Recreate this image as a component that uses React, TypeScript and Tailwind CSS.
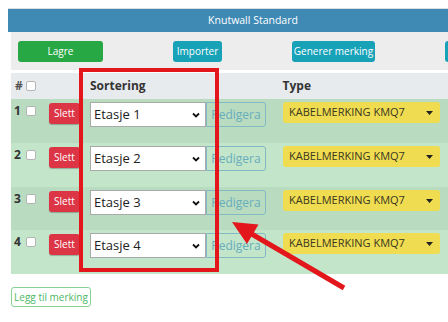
import React from "react";

const rows = [
  { n: 1, h: "h-[44px]", bg: "bg-[#b9dbc0]" },
  { n: 2, h: "h-[44px]", bg: "bg-[#c3e6cb]" },
  { n: 3, h: "h-[43px]", bg: "bg-[#b9dbc0]" },
  { n: 4, h: "h-[44px]", bg: "bg-[#c3e6cb]" },
];

function Check() {
  return <div className="w-[10px] h-[10px] bg-white border border-[#b5b5b5] rounded-[2px] shrink-0" />;
}

export default function App() {
  return (
    <div
      className="relative w-[448px] h-[322px] bg-white overflow-hidden"
      style={{ fontFamily: '"Open Sans", "Liberation Sans", sans-serif' }}
    >
      <div className="pt-[8px] pl-[8px]">
        <div className="w-[490px] h-[24px] bg-[#3f8ab5] border-t border-[#d8dde2] flex items-center justify-center text-white text-[10.5px]">
          Knutwall Standard
        </div>
      </div>
      <div className="pl-[11px]">
        <div className="bg-[#ededed] h-[38px] pt-[9px] pl-[7px] flex gap-[70px] whitespace-nowrap text-[10px] text-white">
          <div className="w-[85px] h-[21px] shrink-0 bg-[#28a745] rounded-[3px] flex items-center justify-center">Lagre</div>
          <div className="w-[49px] h-[21px] shrink-0 bg-[#17a2b8] rounded-[3px] flex items-center justify-center">Importer</div>
          <div className="w-[83px] h-[21px] shrink-0 bg-[#17a2b8] rounded-[3px] flex items-center justify-center">Generer merking</div>
          <div className="w-[60px] h-[21px] shrink-0 bg-[#17a2b8] rounded-[3px]" />
        </div>
        <div className="h-[3px]" />
        <div className="bg-[#e8ebee] h-[26px] flex items-center text-[12px] font-bold text-[#333]">
          <div className="w-[15px] pl-[4px] text-[#555]">#</div>
          <Check />
          <div className="ml-[54px]">Sortering</div>
          <div className="ml-[137px]">Type</div>
        </div>
        {rows.map((r) => (
          <div key={r.n} className={`${r.h} ${r.bg} flex items-start`}>
            <div className="mt-[6px] flex items-center">
              <div className="w-[15px] pl-[3px] text-[12px] font-bold text-[#333] leading-[12px]">{r.n}</div>
              <Check />
            </div>
            <div className="ml-[13px] mt-[4px] w-[31px] h-[21px] bg-[#dc3545] rounded-[3px] text-white text-[10px] flex items-center justify-center shadow-[0_1px_1px_rgba(0,0,0,0.25)]">
              Slett
            </div>
            <div className="ml-[10px] mt-[3px] flex">
              <div className="w-[116px] h-[25px] bg-white border border-[#a9a9a9] flex items-center justify-between pl-[3px] pr-[5px] text-[13px] text-[#222]">
                <span>Etasje {r.n}</span>
                <svg width="8" height="6" viewBox="0 0 8 6">
                  <path d="M1 1.5 L4 4.5 L7 1.5" fill="none" stroke="#111" strokeWidth="1.8" />
                </svg>
              </div>
              <div className="w-[60px] h-[25px] border border-[#82b9c4] rounded-r-[3px] flex items-center justify-center text-[12px] text-[#67adbb]">
                Redigera
              </div>
            </div>
            <div className="ml-[17px] mt-[3px] w-[157px] h-[21px] bg-[#efdc50] rounded-[3px] flex items-center justify-between pl-[6px] pr-[7px] text-[11px] text-[#3a3722]">
              <span>KABELMERKING KMQ7</span>
              <svg width="7" height="4" viewBox="0 0 7 4">
                <path d="M0 0 L7 0 L3.5 4 Z" fill="#222" />
              </svg>
            </div>
          </div>
        ))}
        <div className="mt-[13px] w-[80px] h-[20px] border border-[#86d295] rounded-[3px] flex items-center justify-center text-[10px] text-[#4cb862] whitespace-nowrap">
          Legg til merking
        </div>
      </div>

      <div className="absolute left-[79px] top-[68px] w-[140px] h-[204px] border-[4px] border-[#e3161c]" />
      <svg className="absolute left-0 top-0" width="448" height="322" viewBox="0 0 448 322">
        <line x1="344" y1="288" x2="250" y2="233" stroke="#e3161c" strokeWidth="5" />
        <polygon points="232,222 258.5,224.5 247,244" fill="#e3161c" />
      </svg>
    </div>
  );
}
